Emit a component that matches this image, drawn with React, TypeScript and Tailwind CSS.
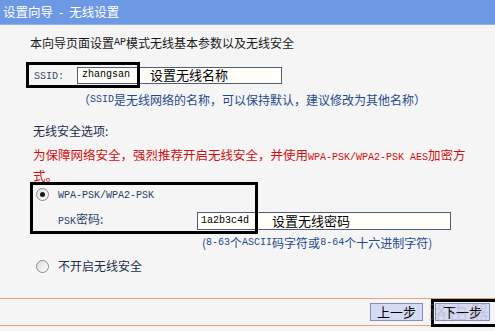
import React from "react";

const cjk = { fontFamily: '"Noto Sans CJK SC", "Noto Sans", sans-serif' };
const mono = { fontFamily: '"Liberation Mono", "DejaVu Sans Mono", monospace' };

function A({ children }: { children: React.ReactNode }) {
  return (
    <span style={mono} className="text-[10px]">
      {children}
    </span>
  );
}

function Radio({ checked }: { checked?: boolean }) {
  return (
    <span className="w-[13px] h-[13px] rounded-full border border-[#8a8a8a] bg-gradient-to-br from-[#dcdcdc] to-[#ffffff] flex items-center justify-center">
      {checked && <span className="w-[5px] h-[5px] rounded-full bg-[#1a1a1a]" />}
    </span>
  );
}

export default function App() {
  return (
    <div
      style={cjk}
      className="w-[495px] h-[331px] bg-[#f5f5f5] overflow-hidden text-[12px] leading-[18px] text-[#1a1a1a]"
    >
      {/* Title bar */}
      <div className="h-[25px] bg-[#6d99e4] border-b border-[#8fb0ea] flex items-center pl-[3px] text-white text-[12.5px]">
        设置向导<span className="mx-[6px]">-</span>无线设置
      </div>

      {/* Intro */}
      <div className="mt-[9px] h-[18px] pl-[30px] flex items-center">
        本向导页面设置<A>AP</A>模式无线基本参数以及无线安全
      </div>

      {/* SSID row */}
      <div className="relative mt-[10px] h-[26px] flex items-center">
        <span className="pl-[34px] w-[77px] text-[#3b4b6b]">
          <A>SSID:</A>
        </span>
        <div className="w-[205px] h-[17px] border border-[#4f5d78] bg-[#fffef9] flex items-center pl-[4px]">
          <span style={mono} className="text-[10px] text-black">zhangsan</span>
          <span className="ml-[20px] text-[13px] text-black">设置无线名称</span>
        </div>
        <div className="absolute left-[26px] top-0 w-[114px] h-[26px] border-[3px] border-black" />
      </div>

      {/* Note 1 */}
      <div className="mt-[3px] h-[18px] pl-[78px] flex items-center text-[#1f4a8c]">
        （<A>SSID</A>是无线网络的名称，可以保持默认，建议修改为其他名称）
      </div>

      {/* Security options */}
      <div className="mt-[13px] h-[18px] pl-[33px] flex items-center text-[#1d2e4d]">
        无线安全选项:
      </div>
      <div className="mt-[6px] ml-[33px] w-[438px] h-[36px] text-[12.5px] leading-[18px] text-[#d01010]">
        为保障网络安全，强烈推荐开启无线安全，并使用<A>WPA-PSK/WPA2-PSK AES</A>加密方式。
      </div>

      {/* WPA section */}
      <div className="relative h-[52px]">
        <div className="h-[25px] flex items-center">
          <span className="ml-[36px]">
            <Radio checked />
          </span>
          <span className="ml-[9px] text-[#2c3f66]">
            <A>WPA-PSK/WPA2-PSK</A>
          </span>
        </div>
        <div className="h-[27px] flex items-center">
          <span className="pl-[58px] w-[197px] text-[#2c3f66]">
            <A>PSK</A>密码:
          </span>
          <div className="w-[254px] h-[18px] border border-[#4f5d78] bg-[#fffef9] flex items-center pl-[3px]">
            <span style={mono} className="text-[10px] text-black">1a2b3c4d</span>
            <span className="ml-[23px] text-[13px] text-black">设置无线密码</span>
          </div>
        </div>
        <div className="absolute left-[30px] top-0 w-[228px] h-[52px] border-[3px] border-black" />
      </div>

      {/* Note 2 */}
      <div className="h-[17px] pl-[202px] flex items-center text-[#1f4a8c]">
        (<A>8-63</A>个<A>ASCII</A>码字符或<A>8-64</A>个十六进制字符)
      </div>

      {/* No security */}
      <div className="mt-[6px] h-[18px] flex items-center">
        <span className="ml-[36px]">
          <Radio />
        </span>
        <span className="ml-[9px] text-[#1d2e4d]">不开启无线安全</span>
      </div>

      {/* Footer */}
      <div className="relative mt-[23px] h-[28px] border-y border-[#e3a473] flex items-center justify-end pr-[5px] gap-[12px]">
        <button className="w-[53px] h-[18px] bg-[#d6dbf5] border border-[#7f8fc4] text-[13px] leading-[16px] text-black flex items-center justify-center">
          上一步
        </button>
        <button className="w-[55px] h-[18px] bg-[#d6dbf5] border border-[#7f8fc4] text-[13px] leading-[16px] text-black flex items-center justify-center">
          下一步
        </button>
        <div className="absolute right-[-4px] top-0 w-[68px] h-[28px] border-[3px] border-black" />
        <span className="absolute right-[4px] top-[2px] text-[19px] leading-[22px] text-[#999] opacity-30 tracking-[2px]">
          路由器
        </span>
      </div>
    </div>
  );
}
